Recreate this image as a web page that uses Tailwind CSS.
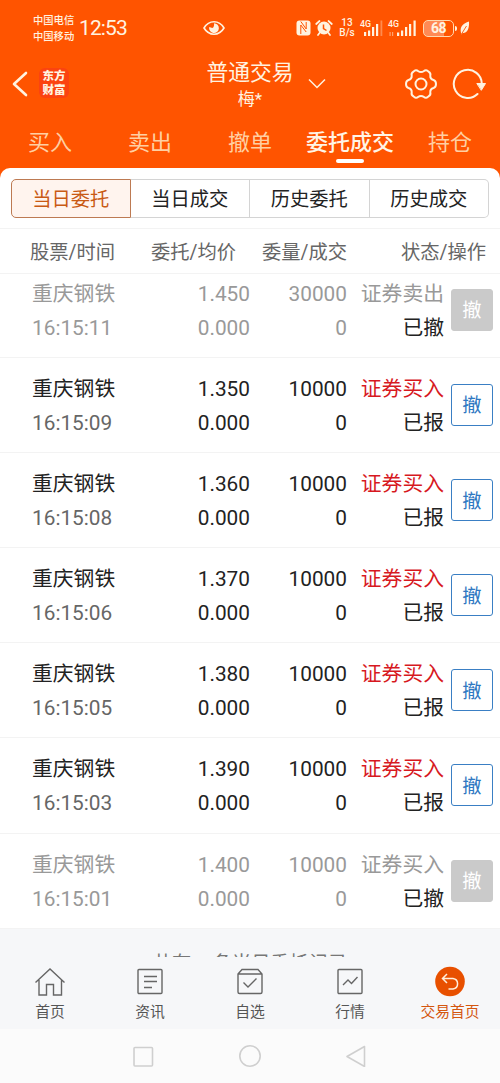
<!DOCTYPE html>
<html lang="zh-CN">
<head>
    <meta charset="UTF-8">
    <meta name="viewport" content="width=device-width, initial-scale=1.0">
    <title>普通交易</title>
    <script src="https://cdn.jsdelivr.net/npm/@tailwindcss/browser@4"></script>
    <style>
        body {
            font-family: Roboto, 'Noto Sans CJK SC', sans-serif;
        }
    </style>
</head>
<body class="w-[500px] h-[1083px] overflow-hidden bg-[#ff5400] flex flex-col">

    <!-- Status bar -->
    <div class="h-14 shrink-0 flex items-center pl-[33px] text-[#fff3e0]">
        <div class="w-[42px] pt-px text-[10.3px] leading-4 font-medium whitespace-nowrap">
            <div>中国电信</div>
            <div>中国移动</div>
        </div>
        <div class="ml-1 w-[50px] text-[21px] leading-none tracking-[-0.9px] whitespace-nowrap">12:53</div>
        <svg class="ml-[74px] w-[22px] h-4" viewBox="0 0 22 16" fill="none" stroke="currentColor" stroke-width="1.6">
            <path d="M1 8C3.5 3.8 7 1.8 11 1.8S18.500 3.800 21 8C18.500 12.200 15 14.200 11 14.200S3.500 12.200 1 8Z"/>
            <path d="M11 3.200A4.900 4.900 0 1 1 6.200 7L9.300 8Q11.500 7 11 3.200Z" fill="currentColor" stroke="none"/>
        </svg>
        <!-- NFC -->
        <svg class="ml-[71px] w-[15px] h-4" viewBox="0 0 15 16" fill="currentColor">
            <rect x="0.500" y="0.500" width="14" height="15" rx="3"/>
            <path d="M4.800 14V5L10.200 12M4.800 1.500L10.200 9V2" fill="none" stroke="#ff5400" stroke-width="1"/>
        </svg>
        <!-- Alarm -->
        <svg class="ml-1 w-[18px] h-4" viewBox="0 0 18 16">
            <circle cx="9" cy="8" r="6.500" fill="currentColor"/>
            <path d="M1.200 4L4.500 1M16.800 4L13.500 1M4.500 13L3 15M13.500 13L15 15" stroke="currentColor" stroke-width="1.700" stroke-linecap="round"/>
            <path d="M8.500 4.500V8.500L11.500 10.500" fill="none" stroke="#ff5400" stroke-width="1.500"/>
        </svg>
        <div class="ml-[6px] w-4 text-center text-[10px] leading-[10px] font-medium">
            <div>13</div>
            <div>B/s</div>
        </div>
        <svg class="ml-[5px] w-6 h-4 overflow-visible" viewBox="0 0 24 16" fill="currentColor">
            <text x="0" y="7" font-size="8.800" font-weight="500">4G</text>
            <path d="M4 12h2.200v4H4zM8 10.500h2.200V16H8zM12 7h2.200v9H12zM16 4h2.200v12H16z"/>
            <path d="M20.500 0.500h1.800V16h-1.800z" opacity=".35"/>
        </svg>
        <svg class="ml-1 w-[29px] h-4 overflow-visible" viewBox="0 0 29 16" fill="currentColor">
            <text x="0" y="7" font-size="8.800" font-weight="500">4G</text>
            <path d="M1.500 12h1.200v4H1.500zM4 12h1.200v4H4z" opacity=".5"/>
            <path d="M9 12.500h2.200V16H9zM13 10.500h2.200V16H13zM17 7h2.200v9H17zM21 4h2.200v12H21zM25.500 0.500h2.200V16h-2.200z"/>
        </svg>
        <div class="ml-[6px] w-[31px] h-[17px] rounded-[5px] border-[1.500px] border-[#ffd9b0] bg-[linear-gradient(90deg,#ff8a55_68%,#ff5400_68%)] flex items-center justify-center text-[14px] leading-none tracking-[-0.5px] font-bold">68</div>
        <div class="ml-px w-[2px] h-[5px] bg-current rounded-r"></div>
        <svg class="ml-[3px] w-[10px] h-[14px]" viewBox="0 0 10 14" fill="currentColor">
            <path d="M9 0.500C3 2.500 0 5.500 0.800 11L1.500 13.500L2.500 12C7 12.500 9.500 8 9 .5Z"/>
            <path d="M1.500 13L6.500 5" stroke="#ff5400" stroke-width=".9"/>
        </svg>
    </div>

    <!-- Title bar -->
    <header class="h-[58px] shrink-0 relative flex items-center px-3 text-[#fff3e0]">
        <svg class="w-4 h-[26px] -mt-0.5" viewBox="0 0 16 26" fill="none" stroke="currentColor" stroke-width="2.600" stroke-linecap="round" stroke-linejoin="round">
            <path d="M14 2L2 13L14 24"/>
        </svg>
        <div class="ml-[11px] mt-[-4px] w-[30px] h-[30px] pt-px rounded-md bg-[#fb4310] flex items-center justify-center text-[11.500px] leading-[13.500px] font-black text-center">东方<br>财富</div>
        <div class="absolute left-[200px] w-[100px] top-px text-center">
            <div class="text-[21.800px] leading-[31px]">普通交易</div>
            <div class="text-[17px] leading-[23px]">梅*</div>
        </div>
        <svg class="absolute left-[308px] top-[22px] w-[18px] h-[11px]" viewBox="0 0 18 11" fill="none" stroke="currentColor" stroke-width="1.500">
            <path d="M1 1.500L9 9.500L17 1.500"/>
        </svg>
        <svg class="ml-auto -mt-[3px] w-8 h-8" viewBox="0 0 32 32" fill="none" stroke="currentColor" stroke-width="2" stroke-linejoin="round">
            <path d="M8.500 3.600Q11 1 13 3Q16 5.200 19 3Q21 1 23.500 3.600Q26 5 25.300 7.500Q25 11 28.500 12Q31 12.800 31 16Q31 19.200 28.500 20Q25 21 25.300 24.500Q26 27 23.500 28.400Q21 31 19 29Q16 26.800 13 29Q11 31 8.500 28.400Q6 27 6.700 24.500Q7 21 3.500 20Q1 19.200 1 16Q1 12.800 3.500 12Q7 11 6.700 7.500Q6 5 8.500 3.600Z"/>
            <circle cx="16" cy="16" r="5.500"/>
        </svg>
        <svg class="ml-[15px] mr-0.5 -mt-[3px] w-[34px] h-8" viewBox="0 0 34 32" fill="none" stroke="currentColor" stroke-width="2" stroke-linecap="round">
            <path d="M25.500 26A14 14 0 1 1 29.800 16"/>
            <path d="M25.200 15.500H33.500L29.500 22Z" fill="currentColor" stroke-width="1" stroke-linejoin="round"/>
        </svg>
    </header>

    <!-- Main tabs -->
    <nav class="h-[54px] shrink-0 grid grid-cols-5 text-center text-[22px] leading-[57px] text-[#ffcfa2] whitespace-nowrap">
        <div>买入</div>
        <div>卖出</div>
        <div>撤单</div>
        <div class="relative h-[54px] font-medium text-[#fff5e6]">委托成交
            <span class="absolute left-[36px] bottom-[5px] w-7 h-1 rounded-full bg-white"></span>
        </div>
        <div>持仓</div>
    </nav>

    <main class="h-[789px] shrink-0 bg-white rounded-t-[10px] overflow-hidden flex flex-col">
        <div class="h-[61px] shrink-0 px-[11px] pt-[11px] border-b border-[#f3f3f3]">
            <div class="h-[39px] grid grid-cols-4 grid-rows-[39px] text-center text-[19.300px] leading-[39px] text-[#222]">
                <div class="border border-[#bd7a52] bg-[#fff4ee] text-[#c95a14] rounded-l-[5px]">当日委托</div>
                <div class="border-y border-r border-[#d4d4d4]">当日成交</div>
                <div class="border-y border-r border-[#d4d4d4]">历史委托</div>
                <div class="border-y border-r border-[#d4d4d4] rounded-r-[5px]">历史成交</div>
            </div>
        </div>

        <div class="h-[45px] shrink-0 flex pl-[30px] pr-[14px] border-b border-[#f3f3f3] text-[19.300px] leading-[47px] text-[#666] whitespace-nowrap">
            <div class="w-[86px]">股票/时间</div>
            <div class="w-[120px] text-right">委托/均价</div>
            <div class="w-[111px] text-right">委量/成交</div>
            <div class="flex-1 text-right">状态/操作</div>
        </div>

        <!-- Order list, scrolled slightly -->
        <div class="flex-1 overflow-hidden bg-[#f6f7f9]">
            <div id="orders" class="-mt-[11px]"></div>
            <div class="pt-[21px] text-center text-[19.200px] leading-7 text-[#777]">共有21条当日委托记录</div>
        </div>
    </main>

    <!-- Bottom nav -->
    <footer class="h-[72px] shrink-0 bg-[#f6f7f9] grid grid-cols-5 text-[14.800px] leading-5 text-[#555] text-center">
        <div class="flex flex-col items-center pt-[9px]">
            <svg class="w-8 h-8" viewBox="0 0 32 32" fill="none" stroke="#666" stroke-width="1.400">
                <path d="M1.500 16.500L16 3L30.500 16.500M5 14V29H12.500V18.500H19.500V29H27.500V14"/>
            </svg>
            <span class="mt-1">首页</span>
        </div>
        <div class="flex flex-col items-center pt-[9px]">
            <svg class="w-8 h-8" viewBox="0 0 32 32" fill="none" stroke="#666" stroke-width="1.400">
                <rect x="4" y="3.500" width="24" height="24" rx="1"/>
                <path d="M10 10.500H23M10 15.500H23M10 21.500H18"/>
            </svg>
            <span class="mt-1">资讯</span>
        </div>
        <div class="flex flex-col items-center pt-[9px]">
            <svg class="w-8 h-8" viewBox="0 0 32 32" fill="none" stroke="#666" stroke-width="1.400">
                <path d="M4 8L8 3.500H24L28 8V26Q28 27.500 26.500 27.500H5.500Q4 27.500 4 26ZM4 8H28M9.500 16.500L14 21L22.500 12.500"/>
            </svg>
            <span class="mt-1">自选</span>
        </div>
        <div class="flex flex-col items-center pt-[9px]">
            <svg class="w-8 h-8" viewBox="0 0 32 32" fill="none" stroke="#666" stroke-width="1.400">
                <rect x="4" y="3.500" width="24" height="24" rx="1"/>
                <path d="M9 19L14 14L17.500 17.500L23.500 11"/>
            </svg>
            <span class="mt-1">行情</span>
        </div>
        <div class="flex flex-col items-center pt-[9px] text-[#d4560f]">
            <svg class="w-8 h-8" viewBox="0 0 32 32" fill="none">
                <circle cx="16" cy="15.500" r="14.800" fill="#e85000"/>
                <path d="M9 12.500H19A5.300 5.300 0 0 1 19 23H14.500M13 8L8.500 12.500L13 17" stroke="#fff0dc" stroke-width="1.500"/>
            </svg>
            <span class="mt-1">交易首页</span>
        </div>
    </footer>

    <!-- System navigation -->
    <div class="h-[54px] shrink-0 bg-[#fbfbfb] flex justify-center gap-[85px] pt-4">
        <svg class="w-[22px] h-[22px]" viewBox="0 0 22 22" fill="none" stroke="#cfcfcf" stroke-width="1.600">
            <rect x="2" y="2.500" width="18.500" height="18.500" rx="1"/>
        </svg>
        <svg class="w-[22px] h-[22px]" viewBox="0 0 22 22" fill="none" stroke="#cfcfcf" stroke-width="1.600">
            <circle cx="11" cy="11" r="10.200"/>
        </svg>
        <svg class="w-[22px] h-[22px]" viewBox="0 0 22 22" fill="none" stroke="#cfcfcf" stroke-width="1.600" stroke-linejoin="round">
            <path d="M18.500 1.500V21.500L1 11.500Z"/>
        </svg>
    </div>

    <script>
        const orders = [
            { time: '16:15:11', price: '1.450', qty: '30000', side: '证券卖出', cancelled: true },
            { time: '16:15:09', price: '1.350', qty: '10000', side: '证券买入' },
            { time: '16:15:08', price: '1.360', qty: '10000', side: '证券买入' },
            { time: '16:15:06', price: '1.370', qty: '10000', side: '证券买入' },
            { time: '16:15:05', price: '1.380', qty: '10000', side: '证券买入' },
            { time: '16:15:03', price: '1.390', qty: '10000', side: '证券买入' },
            { time: '16:15:01', price: '1.400', qty: '10000', side: '证券买入', cancelled: true },
        ];

        document.getElementById('orders').innerHTML = orders.map(o => {
            const main = o.cancelled ? 'text-[#999]' : 'text-[#222]';
            const time = o.cancelled ? 'text-[#999]' : 'text-[#666]';
            const side = o.cancelled ? 'text-[#999]' : 'text-[#d7191f]';
            const button = o.cancelled
                ? 'bg-[#cacaca] border-[#cacaca] text-white'
                : 'bg-white border-[#3a7fc4] text-[#2f78c2]';
            return `
            <div class="h-[95.100px] bg-white border-b border-[#f3f3f3] flex items-start pl-8 pr-[7px] pt-[14px] text-[20.800px] leading-[34px] whitespace-nowrap ${main}">
                <div class="w-[100px]">
                    <div>重庆钢铁</div>
                    <div class="${time}">${o.time}</div>
                </div>
                <div class="w-[118px] text-right">
                    <div>${o.price}</div>
                    <div>0.000</div>
                </div>
                <div class="w-[97px] text-right">
                    <div>${o.qty}</div>
                    <div>0</div>
                </div>
                <div class="w-[97px] text-right">
                    <div class="${side}">${o.side}</div>
                    <div class="text-[#222]">${o.cancelled ? '已撤' : '已报'}</div>
                </div>
                <button class="ml-auto mt-3 w-[42px] h-[42px] pt-0.5 rounded-[3px] border-[1.500px] text-[19.300px] leading-none ${button}">撤</button>
            </div>`;
        }).join('');
    </script>
</body>
</html>
